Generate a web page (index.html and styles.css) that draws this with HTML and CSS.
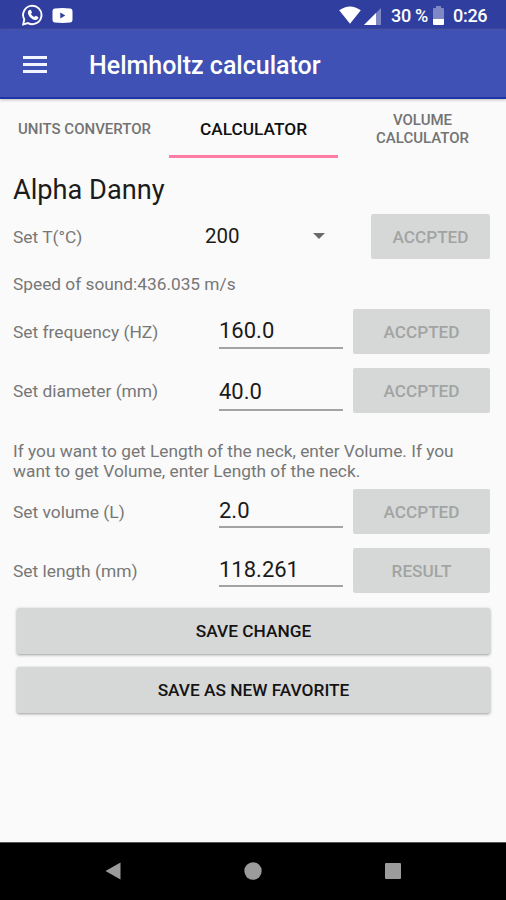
FILE: index.html
```html
<!DOCTYPE html>
<html lang="en">
<head>
<meta charset="utf-8">
<title>Helmholtz calculator</title>
<link rel="stylesheet" href="styles.css">
</head>
<body>
<div class="screen">
  <header class="status">
    <svg class="whatsapp" width="22" height="22" viewBox="0 0 22 22"><path d="M2.3 15.5A9.2 9.2 0 1 1 6 19.1L1.2 20.4Z" fill="none" stroke="#fff" stroke-width="1.9"/><path d="M7.1 5.9 8.8 5.7 10 8.5 8.9 10Q10.1 12.2 12.3 13L13.6 11.7 16.3 13V14.3Q15.3 16.3 13.2 16C9.4 15.3 6.4 12 5.9 8.9Q5.8 7.1 7.1 5.9Z" fill="#fff"/></svg>
    <svg width="21" height="15" viewBox="0 0 21 15"><path fill="#fff" fill-rule="evenodd" d="M3 .5Q10.500-.5 18 .5 20.500.7 20.500 3.500V11.500Q20.500 14.300 18 14.500 10.500 15.300 3 14.500 .5 14.300 .5 11.500V3.500Q.5 .7 3 .5ZM8.300 4.600V10.400L13.300 7.500Z"/></svg>
    <span class="grow"></span>
    <svg class="wifi" width="22" height="18" viewBox="0 0 22 18"><path fill="#fff" d="M.2 4.300Q11-3.500 21.800 4.300L11 17.800Z"/></svg>
    <svg class="signal" width="17" height="17" viewBox="0 0 17 17"><path fill="#7f88c4" d="M17 0V17H0Z"/><path fill="#fff" d="M12 5V17H0Z"/></svg>
    <span class="percent">30 %</span>
    <svg class="battery" width="11" height="19" viewBox="0 0 11 19"><path fill="#7f88c4" d="M3 0H8V2H10Q11 2 11 3V13H0V3Q0 2 1 2H3Z"/><path fill="#fff" d="M0 13H11V18Q11 19 10 19H1Q0 19 0 18Z"/></svg>
    <span class="clock">0:26</span>
  </header>
  <div class="appbar">
    <div class="burger"><i></i><i></i><i></i></div>
    <h1>Helmholtz calculator</h1>
  </div>
  <nav class="tabs">
    <a class="tab">UNITS CONVERTOR</a>
    <a class="tab active">CALCULATOR</a>
    <a class="tab">VOLUME<br>CALCULATOR</a>
  </nav>
  <main>
    <h2>Alpha Danny</h2>
    <div class="row">
      <span class="label">Set T(°C)</span>
      <div class="spinner"><span>200</span><svg width="12" height="6" viewBox="0 0 12 6"><path fill="#6a6a6a" d="M0 0H12L6 6Z"/></svg></div>
      <button class="narrow" disabled>ACCPTED</button>
    </div>
    <p class="speed">Speed of sound:436.035 m/s</p>
    <div class="row"><span class="label">Set frequency (HZ)</span><div class="field">160.0</div><button disabled>ACCPTED</button></div>
    <div class="row"><span class="label">Set diameter (mm)</span><div class="field low">40.0</div><button disabled>ACCPTED</button></div>
    <p class="hint">If you want to get Length of the neck, enter Volume. If you<br>want to get Volume, enter Length of the neck.</p>
    <div class="row"><span class="label">Set volume (L)</span><div class="field short">2.0</div><button disabled>ACCPTED</button></div>
    <div class="row"><span class="label">Set length (mm)</span><div class="field short">118.261</div><button disabled>RESULT</button></div>
    <button class="wide">SAVE CHANGE</button>
    <button class="wide">SAVE AS NEW FAVORITE</button>
  </main>
  <footer class="navbar">
    <svg width="16" height="18" viewBox="0 0 16 18"><path fill="#9b9b9b" d="M15.500 .5V17.500L.5 9Z"/></svg>
    <svg width="18" height="18" viewBox="0 0 18 18"><circle fill="#9b9b9b" cx="9" cy="9" r="8.700"/></svg>
    <svg width="16" height="16" viewBox="0 0 16 16"><rect fill="#9b9b9b" width="16" height="16" rx="1"/></svg>
  </footer>
</div>
</body>
</html>
```
FILE: styles.css
```css
* { box-sizing: border-box; }
body { margin: 0; font-family: Roboto, "Liberation Sans", sans-serif; background: #fafafa; }
h1, h2, p { margin: 0; font-weight: 400; }
svg { display: block; flex: none; }
.screen { display: flex; flex-direction: column; width: 506px; height: 900px; overflow: hidden; white-space: nowrap; }

.status { display: flex; align-items: center; height: 30px; flex: none; padding: 0 19px 0 22px; background: #303f9f; color: #fff; font-size: 18px; font-weight: 500; line-height: 30px; }
.whatsapp { margin-right: 8px; }
.grow { flex: 1; }
.wifi { margin-right: 3px; }
.signal { margin: 2px 10px 0 0; }
.percent { width: 38px; margin-right: 4px; padding-top: 2px; letter-spacing: -0.3px; }
.battery { margin-right: 9px; }
.clock { width: 34px; padding-top: 2px; letter-spacing: -0.3px; }

.appbar { display: flex; align-items: center; height: 69px; flex: none; padding: 2px 0 0 23px; background: #3f51b5; border-bottom: 2px solid #1e35a5; box-shadow: 0 1px 3px #bbb; }
.burger { display: flex; flex-direction: column; gap: 4px; width: 24px; margin-right: 42px; }
.burger i { height: 3px; background: #f1f3ff; }
h1 { padding-top: 2px; font-size: 25px; font-weight: 500; color: #fff; }

.tabs { display: grid; grid-template-columns: 169px 169px 168px; height: 59px; flex: none; }
.tab { display: flex; align-items: center; justify-content: center; border-bottom: 3px solid transparent; padding-top: 3px; font-size: 15px; line-height: 18px; font-weight: 500; color: #737373; text-align: center; }
.tab:last-child { padding-left: 1px; }
.tab.active { font-size: 17.300px; color: #111; border-color: #ff7ca5; }

main { flex: 1; display: flex; flex-direction: column; padding: 14px 16px 0 13px; }
h2 { height: 35px; font-size: 27.200px; line-height: 37px; color: #1b1b1b; }
.row { display: flex; align-items: center; height: 59px; flex: none; }
.label { width: 206px; flex: none; font-size: 17.400px; color: #777; }
button { width: 137px; height: 45px; flex: none; padding: 1px 0 0; border: 0; border-radius: 2px; background: #d6d8d7; font: 500 17.200px Roboto, sans-serif; color: #a2a4a3; }
.narrow { width: 119px; }
.spinner { display: flex; align-items: center; justify-content: space-between; flex: none; width: 120px; margin: -1px 46px 0 -14px; font-size: 20.500px; color: #1b1b1b; }
.field { width: 124px; height: 35px; margin-right: 10px; border-bottom: 2px solid #a3a3a3; font-size: 22px; line-height: 34px; color: #1b1b1b; }
.field.low { height: 36px; margin-top: 4px; }
.field.short { height: 34px; margin-top: -1px; }
.speed { height: 36px; font-size: 17.300px; line-height: 37px; color: #777; }
.hint { height: 62px; padding-top: 21px; font-size: 17.300px; line-height: 20px; color: #777; }
.wide { width: auto; height: 46px; flex: none; margin: 8px 0 5px 4px; padding: 0; font-size: 17.300px; color: #141414; box-shadow: 0 1px 3px #999; }

.navbar { height: 58px; flex: none; display: flex; align-items: center; justify-content: space-between; padding: 0 105px 2px; background: #000; border-top: 1px solid #555; }
```
